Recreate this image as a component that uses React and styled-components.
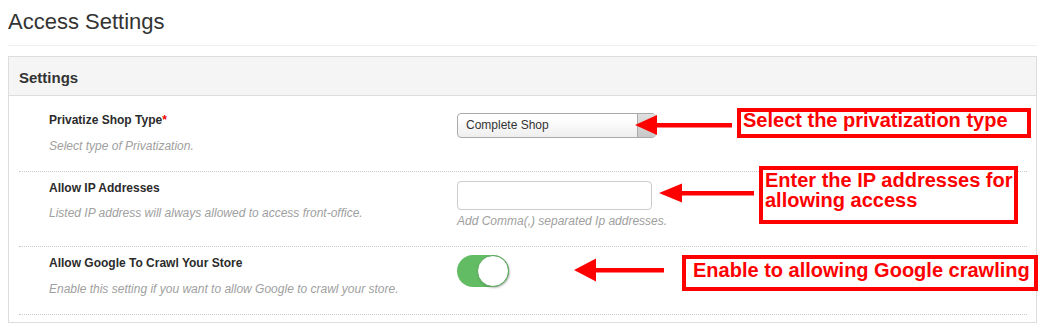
import React from "react";
import styled, { createGlobalStyle } from "styled-components";

const Global = createGlobalStyle`
  html, body { margin: 0; padding: 0; background: #fff; }
  body { font-family: "Liberation Sans", Arial, sans-serif; color: #333; }
  * { box-sizing: border-box; }
`;

const Page = styled.div`
  position: relative;
  width: 1044px;
  padding: 9px 7px 0 8px;
`;

const Title = styled.h1`
  margin: 0;
  font-size: 22px;
  line-height: 26px;
  font-weight: 400;
  color: #333;
`;

const Rule = styled.hr`
  margin: 10px 0 10px;
  border: 0;
  border-top: 1px solid #eee;
  width: 1029px;
`;

const Panel = styled.section`
  width: 1029px;
  border: 1px solid #ddd;
  background: #fff;
`;

const PanelHeading = styled.div`
  height: 39px;
  padding: 2px 10px 0;
  display: flex;
  align-items: center;
  background: #f5f5f5;
  border-bottom: 1px solid #ddd;
  font-size: 15px;
  font-weight: 700;
  color: #333;
`;

const PanelBody = styled.div`
  padding: 8px 9px 7px 10px;
`;

const Row = styled.div`
  display: grid;
  grid-template-columns: 438px 1fr;
  padding: 8px 0 16px;
  border-bottom: 1px dotted #ccc;
`;

const LabelCol = styled.div`
  padding-left: 30px;
`;

const Label = styled.div`
  font-size: 12px;
  line-height: 17px;
  font-weight: 700;
  color: #2b2b2b;
`;

const Req = styled.span`
  color: #e00;
`;

const Help = styled.div`
  margin-top: ${(p) => p.$mt || "8.6px"};
  font-size: 12px;
  line-height: 17px;
  font-style: italic;
  color: #a0a0a0;
`;

const ControlCol = styled.div`
  padding-top: ${(p) => p.$pt || "0"};
`;

const Select = styled.div`
  position: relative;
  width: 199px;
  height: 25px;
  border: 1px solid #aaa;
  border-radius: 4px;
  background: linear-gradient(#ffffff 20%, #eeeeee);
  font-size: 12px;
  line-height: 23px;
  padding-left: 8px;
  color: #333;
  overflow: hidden;
`;

const SelectArrow = styled.b`
  position: absolute;
  top: 0;
  right: 0;
  width: 18px;
  height: 100%;
  background: linear-gradient(#e0e0e0, #c8c8c8);
  border-left: 1px solid #aaa;
  &::after {
    content: "";
    position: absolute;
    left: 4px;
    top: 9px;
    border-left: 4px solid transparent;
    border-right: 4px solid transparent;
    border-top: 5px solid #777;
  }
`;

const TextInput = styled.input`
  display: block;
  width: 195px;
  height: 29px;
  border: 1px solid #ccc;
  border-radius: 4px;
  background: #fff;
  outline: none;
  font-family: inherit;
`;

const Toggle = styled.div`
  position: relative;
  width: 52px;
  height: 32px;
  border-radius: 16px;
  background: #62bc64;
`;

const Knob = styled.span`
  position: absolute;
  right: 0;
  top: 0;
  width: 32px;
  height: 32px;
  border-radius: 50%;
  background: #fff;
  border: 1px solid #5aa85c;
  box-shadow: 1px 1px 2px rgba(0, 0, 0, 0.25);
`;

const Arrow = styled.svg`
  position: absolute;
  overflow: visible;
  left: 0;
  top: 0;
  pointer-events: none;
`;

const Note = styled.div`
  position: absolute;
  left: ${(p) => p.$x}px;
  top: ${(p) => p.$y}px;
  width: ${(p) => p.$w}px;
  height: ${(p) => p.$h}px;
  border: 4px solid #ff0000;
  padding-left: ${(p) => p.$pl}px;
  font-size: 20px;
  font-weight: 700;
  line-height: ${(p) => p.$lh}px;
  color: #ff0000;
  white-space: nowrap;
  background: #fff;
`;

function RedArrow({ tip, y, base, end, half }) {
  return (
    <g fill="#ff0000" stroke="none">
      <polygon points={`${tip},${y} ${base},${y - half} ${base},${y + half}`} />
      <rect x={base - 2} y={y - 2} width={end - base + 2} height={4.5} />
    </g>
  );
}

export default function App() {
  return (
    <>
      <Global />
      <Page>
        <Title>Access Settings</Title>
        <Rule />
        <Panel>
          <PanelHeading>Settings</PanelHeading>
          <PanelBody>
            <Row>
              <LabelCol>
                <Label>
                  Privatize Shop Type<Req>*</Req>
                </Label>
                <Help>Select type of Privatization.</Help>
              </LabelCol>
              <ControlCol $pt="0.5px">
                <Select>
                  Complete Shop
                  <SelectArrow />
                </Select>
              </ControlCol>
            </Row>
            <Row>
              <LabelCol>
                <Label>Allow IP Addresses</Label>
                <Help>Listed IP address will always allowed to access front-office.</Help>
              </LabelCol>
              <ControlCol $pt="1px">
                <TextInput type="text" />
                <Help $mt="3.5px">Add Comma(,) separated Ip addresses.</Help>
              </ControlCol>
            </Row>
            <Row>
              <LabelCol>
                <Label>Allow Google To Crawl Your Store</Label>
                <Help>Enable this setting if you want to allow Google to crawl your store.</Help>
              </LabelCol>
              <ControlCol>
                <Toggle>
                  <Knob />
                </Toggle>
              </ControlCol>
            </Row>
          </PanelBody>
        </Panel>

        <Arrow width="1044" height="327">
          <RedArrow tip={635} y={125} base={657} end={732} half={10} />
          <RedArrow tip={659} y={193} base={682} end={754} half={9.5} />
          <RedArrow tip={574} y={270} base={596} end={664} half={11.5} />
        </Arrow>
        <Note $x={737} $y={108} $w={294} $h={30} $pl={2} $lh={16}>
          Select the privatization type
        </Note>
        <Note $x={759} $y={166} $w={259} $h={58} $pl={2} $lh={20}>
          Enter the IP addresses for
          <br />
          allowing access
        </Note>
        <Note $x={682} $y={255} $w={356} $h={36} $pl={7} $lh={22}>
          Enable to allowing Google crawling
        </Note>
      </Page>
    </>
  );
}
